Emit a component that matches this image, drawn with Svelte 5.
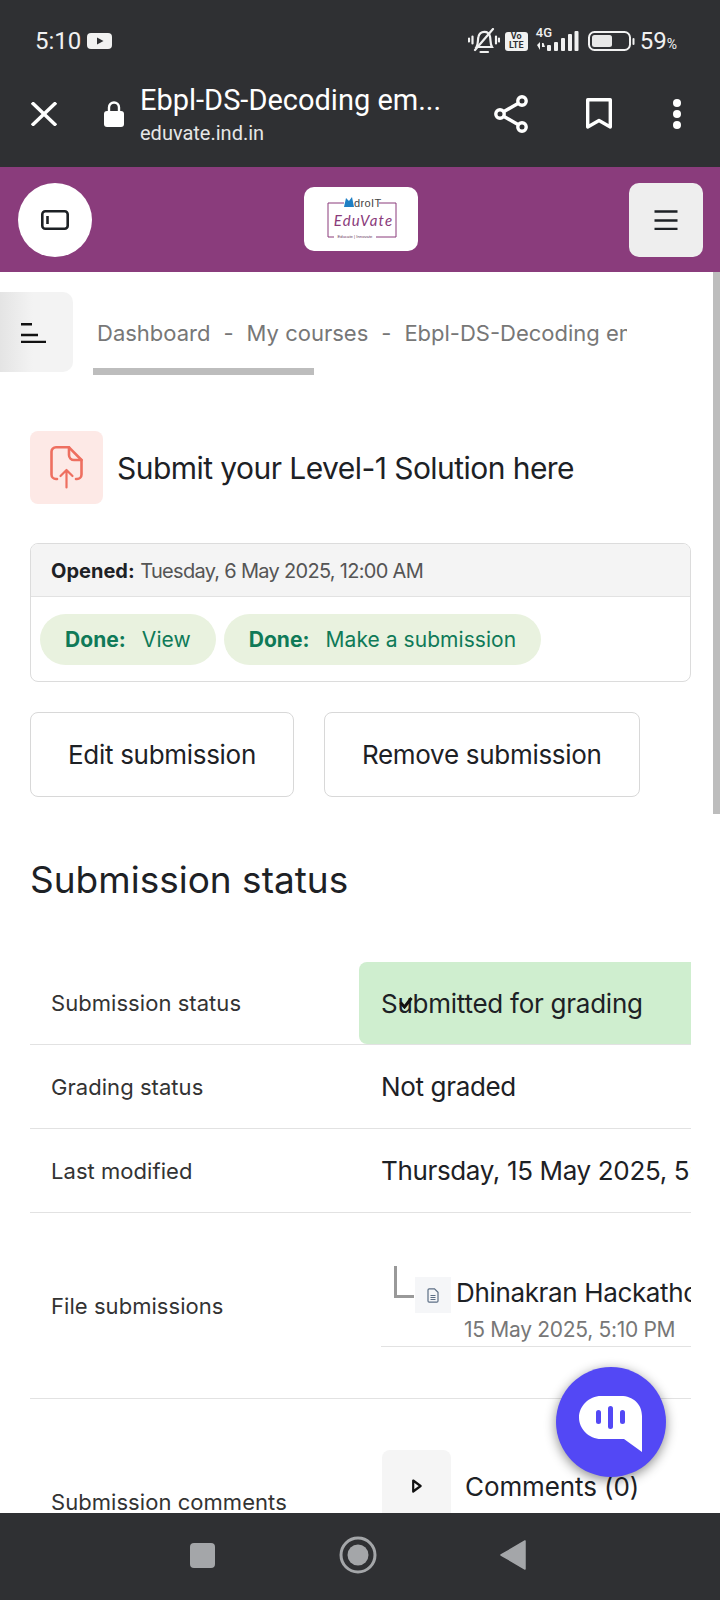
<script lang="ts">
	const rows = [
		{ label: 'Grading status', value: 'Not graded' },
		{ label: 'Last modified', value: 'Thursday, 15 May 2025, 5:10 PM' },
	];
	const crumbs = ['Dashboard', 'My courses', 'Ebpl-DS-Decoding embedded systems'];
</script>

<div class="phone">
	<!-- Android status bar -->
	<div class="status">
		<span class="clock">5:10</span>
		<svg class="yt" viewBox="0 0 25 16"><rect width="25" height="16" rx="4" fill="#f1f1f1"/><path d="M10 4.5 L16.5 8 L10 11.5Z" fill="#2f3033"/></svg>
		<span class="status-right">
			<svg class="bell" viewBox="0 0 32 26" fill="none" stroke="#f1f1f1" stroke-width="2.2" stroke-linecap="round">
				<path d="M8.5 19 C10.500 15.500 9.500 12 10.500 8.500 C12 2.500 20.500 2 22 8.500 C22.800 12 22 15.500 24 19Z"/>
				<path d="M12.500 24 H20"/>
				<path d="M7 22 L25 1"/>
				<path d="M4.500 8.500 V15.500 M1 10.500 V13.500 M28 8.500 V15.500 M31 10.500 V13.500"/>
			</svg>
			<span class="volte">Vo<br />LTE</span>
			<span class="net">
				<span class="four-g">4G</span>
				<svg viewBox="0 0 44 22" fill="#f1f1f1">
					<path d="M2 15 L5 12 V20Z M7 13 H8.5 L10 17 L7 17Z"/>
					<rect x="12" y="15" width="4" height="6" rx="1"/>
					<rect x="19" y="12" width="4" height="9" rx="1"/>
					<rect x="26" y="8" width="4" height="13" rx="1"/>
					<rect x="33" y="4" width="4" height="17" rx="1"/>
					<rect x="39.5" y="1" width="4" height="20" rx="1"/>
				</svg>
			</span>
			<svg class="battery" viewBox="0 0 47 20">
				<rect x="1" y="1" width="41" height="18" rx="5.5" fill="none" stroke="#f1f1f1" stroke-width="2"/>
				<rect x="4" y="4" width="20" height="12" rx="2.5" fill="#e8e8e8"/>
				<rect x="44.5" y="7" width="2" height="7" rx="1" fill="#f1f1f1"/>
			</svg>
			<span class="pct">59<small>%</small></span>
		</span>
	</div>

	<!-- Custom tab toolbar -->
	<div class="toolbar">
		<svg class="close" viewBox="0 0 26 24" fill="none" stroke="#fff" stroke-width="3.4"><path d="M1 0.5 L25 23.5 M25 0.5 L1 23.5"/></svg>
		<svg class="lock" viewBox="0 0 20 26"><path d="M5 11 V6.5 a5 5 0 0 1 10 0 V11" fill="none" stroke="#fff" stroke-width="2.4"/><rect y="10" width="20" height="16" rx="3" fill="#fff"/></svg>
		<div class="tab-title">
			<div class="page-name">Ebpl-DS-Decoding em...</div>
			<div class="page-url">eduvate.ind.in</div>
		</div>
		<svg class="share" viewBox="0 0 34 38" fill="none" stroke="#fff" stroke-width="3.4">
			<circle cx="28" cy="6" r="4.2"/><circle cx="6" cy="19" r="4.2"/><circle cx="28" cy="32" r="4.2"/>
			<path d="M24.4 8.2 L9.6 16.8 M9.6 21.2 L24.4 29.8"/>
		</svg>
		<svg class="mark" viewBox="0 0 26 32" fill="none" stroke="#fff" stroke-width="3.4"><path d="M1.7 1.7 H24.3 V29 L13 22.5 L1.7 29Z" stroke-linejoin="round"/></svg>
		<svg class="dots" viewBox="0 0 10 30" fill="#fff"><circle cx="5" cy="4" r="4"/><circle cx="5" cy="15" r="4"/><circle cx="5" cy="26" r="4"/></svg>
	</div>

	<!-- Site header -->
	<header class="site-head">
		<button class="round-btn" aria-label="Toggle drawer">
			<svg viewBox="0 0 28 20" fill="none" stroke="#1d2125" stroke-width="2.6"><rect x="1.3" y="1.3" width="25.4" height="17.4" rx="3"/><path d="M6.5 6 V14"/></svg>
		</button>
		<div class="logo">
			<svg viewBox="0 0 114 64">
				<path d="M40 16 H24 V50 H30 M72 50 H92 V16 H75" fill="none" stroke="#8a3b7b" stroke-width="1"/>
				<path d="M40 20 L42 11 L45 14 L48 10 L50 20Z" fill="#1f7fc4"/>
				<text x="50" y="20" class="logo-adroit">droIT</text>
				<text x="59.500" y="38.500" text-anchor="middle" class="logo-name">EduVate</text>
				<text x="51" y="51.200" text-anchor="middle" class="logo-sub">Educate | Innovate</text>
			</svg>
		</div>
		<button class="menu-btn" aria-label="Menu">
			<svg viewBox="0 0 24 20" fill="none" stroke="#1d2125" stroke-width="2.6"><path d="M0.5 1.5 H23.5 M0.5 10.5 H23.5 M0.5 19 H23.5"/></svg>
		</button>
	</header>

	<main class="content">
		<div class="page-scroll"></div>

		<div class="crumb-row">
			<button class="side-btn" aria-label="Course index">
				<svg viewBox="0 0 25 20" fill="none" stroke="#111" stroke-width="2.4"><path d="M0 1.200 H11 M0 12 H17 M0 19 H25"/></svg>
			</button>
			<div class="crumb-wrap">
				<nav class="crumbs">
					{#each crumbs as c, i}
						{#if i > 0}<span class="sep">-</span>{/if}
						<span>{c}</span>
					{/each}
				</nav>
				<div class="crumb-bar"></div>
			</div>
		</div>

		<div class="activity">
			<div class="act-icon">
				<svg viewBox="0 0 33 43" fill="none" stroke="#ee6f60" stroke-width="2.6" stroke-linecap="round" stroke-linejoin="round">
					<path d="M7 33 H6 a4.500 4.500 0 0 1 -4.500 -4.500 V6 A4.500 4.500 0 0 1 6 1.300 H19 L31.500 14 V28.500 A4.500 4.500 0 0 1 27 33 H26"/>
					<path d="M19 1.300 V9 A5 5 0 0 0 24 14 H31.500"/>
					<path d="M16.500 41.500 V24 M10.500 30 L16.500 24 L22.500 30" stroke-width="2.200"/>
				</svg>
			</div>
			<h1>Submit your Level-1 Solution here</h1>
		</div>

		<section class="dates">
			<div class="dates-head"><strong>Opened:</strong> <span>Tuesday, 6 May 2025, 12:00 AM</span></div>
			<div class="dates-body">
				<span class="pill"><b>Done:</b> View</span>
				<span class="pill"><b>Done:</b> Make a submission</span>
			</div>
		</section>

		<div class="actions">
			<button class="btn">Edit submission</button>
			<button class="btn">Remove submission</button>
		</div>

		<h2>Submission status</h2>

		<div class="table">
			<div class="row first">
				<div class="label">Submission status</div>
				<div class="value ok">
					<svg class="check" viewBox="0 0 14 12" fill="none" stroke="#111" stroke-width="3"><path d="M1.5 5.5 L5.5 10 L12.5 1"/></svg>
					Submitted for grading
				</div>
			</div>
			{#each rows as r}
				<div class="row">
					<div class="label">{r.label}</div>
					<div class="value">{r.value}</div>
				</div>
			{/each}
			<div class="row files">
				<div class="label">File submissions</div>
				<div class="value">
					<div class="file-line">
						<span class="tree"></span>
						<span class="file-icon">
							<svg viewBox="0 0 12 15" fill="none" stroke="#5d6f85" stroke-width="1.2"><path d="M1 2 A1.2 1.2 0 0 1 2.2 .8 H7.5 L11 4.3 V13 A1.2 1.2 0 0 1 9.8 14.2 H2.2 A1.2 1.2 0 0 1 1 13Z"/><path d="M3.5 7.5 H8.5 M3.5 9.5 H8.5 M3.5 11.5 H8.5" stroke-width="1"/></svg>
						</span>
						<span class="file-name">Dhinakran Hackathon Solution.pdf</span>
					</div>
					<div class="file-date">15 May 2025, 5:10 PM</div>
				</div>
			</div>
			<div class="row comments">
				<div class="label">Submission comments</div>
				<div class="value">
					<span class="cm-toggle">
						<svg viewBox="0 0 10 14" fill="none" stroke="#111" stroke-width="2.2" stroke-linejoin="round"><path d="M1.2 1.5 L8.6 7 L1.2 12.5Z"/></svg>
					</span>
					<span>Comments (0)</span>
				</div>
			</div>
		</div>

		<button class="fab" aria-label="Chat">
			<svg viewBox="0 0 63 56">
				<path d="M22 0 H42 C54 0 63 8 63 20 V56 L45 43 H22 C10 43 0 33 0 21.500 C0 10 10 0 22 0Z" fill="#fff"/>
				<rect x="17" y="14" width="5" height="14" rx="2.500" fill="#5348f5"/>
				<rect x="29" y="10" width="5" height="23" rx="2.500" fill="#5348f5"/>
				<rect x="41" y="14" width="5" height="14" rx="2.500" fill="#5348f5"/>
			</svg>
		</button>
	</main>

	<!-- Android nav bar -->
	<div class="navbar">
		<span class="nav-square"></span>
		<svg class="nav-home" viewBox="0 0 38 38"><circle cx="19" cy="19" r="17" fill="none" stroke="#a4a6a9" stroke-width="3"/><circle cx="19" cy="19" r="10.500" fill="#a4a6a9"/></svg>
		<svg class="nav-back" viewBox="0 0 26 32"><path d="M25 2 V30 L1 16Z" fill="#a4a6a9" stroke="#a4a6a9" stroke-width="1.500" stroke-linejoin="round"/></svg>
	</div>
</div>

<style>
	:global(body) {
		margin: 0;
		background: #fff;
	}

	.phone {
		width: 720px;
		height: 1600px;
		display: flex;
		flex-direction: column;
		overflow: hidden;
		font-family: Inter, "Noto Sans", sans-serif;
		color: #1d2125;
	}

	button {
		padding: 0;
		border: none;
		font: inherit;
		color: inherit;
	}

	/* ── Status bar ─────────────────────────── */
	.status {
		height: 84px;
		flex-shrink: 0;
		box-sizing: border-box;
		background: #2f3033;
		color: #f1f1f1;
		font-family: Roboto, sans-serif;
		display: flex;
		align-items: center;
		padding: 0 0 2px 35px;
	}

	.clock {
		font-size: 24px;
		width: 52px;
	}

	.yt {
		width: 25px;
		height: 16px;
	}

	.status-right {
		margin-left: auto;
		display: flex;
		align-items: center;
		margin-right: 43px;
	}

	.bell {
		width: 32px;
		height: 26px;
		margin-right: 5px;
	}

	.volte {
		width: 23px;
		height: 19px;
		border-radius: 3px;
		background: #f1f1f1;
		color: #2f3033;
		font-size: 9px;
		font-weight: 700;
		line-height: 9px;
		text-align: center;
		margin-right: 7px;
	}

	.net {
		position: relative;
		width: 44px;
		height: 22px;
		margin-right: 9px;
	}

	.net svg {
		display: block;
		width: 44px;
		height: 22px;
	}

	.four-g {
		position: absolute;
		left: 1px;
		top: -4px;
		font-size: 13px;
		font-weight: 500;
		line-height: 13px;
	}

	.battery {
		width: 47px;
		height: 20px;
		margin-right: 5px;
	}

	.pct {
		font-size: 24px;
	}

	.pct small {
		font-size: 14px;
	}

	/* ── Toolbar ────────────────────────────── */
	.toolbar {
		height: 83px;
		flex-shrink: 0;
		box-sizing: border-box;
		background: #2f3033;
		display: flex;
		align-items: center;
		padding-bottom: 23px;
		color: #fff;
		font-family: Roboto, sans-serif;
	}

	.close {
		width: 26px;
		height: 24px;
		margin-left: 31px;
	}

	.lock {
		width: 20px;
		height: 26px;
		margin-left: 47px;
	}

	.tab-title {
		margin-left: 16px;
		width: 340px;
	}

	.page-name {
		font-size: 29px;
		line-height: 36px;
	}

	.page-url {
		font-size: 20px;
		line-height: 26px;
		margin-top: 2px;
		color: #f0f0f0;
		opacity: 0.95;
	}

	.share {
		width: 34px;
		height: 38px;
		margin-left: 14px;
	}

	.mark {
		width: 26px;
		height: 32px;
		margin-left: 58px;
	}

	.dots {
		width: 10px;
		height: 30px;
		margin-left: 60px;
	}

	/* ── Site header ────────────────────────── */
	.site-head {
		height: 105px;
		flex-shrink: 0;
		background: #8a3c7c;
		display: flex;
		align-items: center;
		justify-content: space-between;
		padding: 0 17px 0 18px;
	}

	.round-btn {
		width: 74px;
		height: 74px;
		border-radius: 50%;
		background: #fff;
		display: flex;
		align-items: center;
		justify-content: center;
	}

	.round-btn svg {
		width: 28px;
		height: 20px;
	}

	.logo {
		width: 114px;
		height: 64px;
		margin-top: -2px;
		background: #fff;
		border-radius: 10px;
	}

	.logo svg {
		display: block;
		width: 114px;
		height: 64px;
	}

	.logo-adroit {
		font-family: "Liberation Sans", sans-serif;
		font-size: 11px;
		letter-spacing: 0.4px;
		fill: #444;
	}

	.logo-name {
		font-family: Lato, sans-serif;
		font-style: italic;
		font-size: 15px;
		letter-spacing: 1.2px;
		fill: #8a3b7b;
	}

	.logo-sub {
		font-family: "Liberation Sans", sans-serif;
		font-size: 4.200px;
		fill: #6b3a62;
	}

	.menu-btn {
		width: 74px;
		height: 74px;
		border-radius: 10px;
		background: #eeeeee;
		display: flex;
		align-items: center;
		justify-content: center;
	}

	.menu-btn svg {
		width: 24px;
		height: 20px;
	}

	/* ── Content ────────────────────────────── */
	.content {
		flex: 1;
		min-height: 0;
		position: relative;
		overflow: hidden;
		background: #fff;
		padding: 20px 29px 0 30px;
	}

	.page-scroll {
		position: absolute;
		right: 0;
		top: 0;
		width: 7px;
		height: 542px;
		background: #bdbdbd;
	}

	.crumb-row {
		display: flex;
		margin-left: -30px;
		height: 83px;
	}

	.side-btn {
		width: 73px;
		height: 80px;
		flex-shrink: 0;
		border-radius: 0 10px 10px 0;
		background: linear-gradient(90deg, #e4e4e4, #f3f3f3 45%);
		display: flex;
		align-items: center;
		padding-left: 21px;
		box-sizing: border-box;
	}

	.side-btn svg {
		width: 25px;
		height: 20px;
		margin-top: 2px;
	}

	.crumb-wrap {
		margin-left: 20px;
		width: 534px;
		overflow: hidden;
	}

	.crumbs {
		display: flex;
		white-space: nowrap;
		font-size: 22px;
		line-height: 30px;
		color: #777;
		padding: 26px 0 0 4px;
		gap: 13px;
	}

	.crumb-bar {
		width: 221px;
		height: 7px;
		background: #bdbdbd;
		margin-top: 20px;
	}

	.activity {
		display: flex;
		align-items: center;
		margin-top: 56px;
		gap: 14px;
	}

	.act-icon {
		width: 73px;
		height: 73px;
		border-radius: 8px;
		background: #fde9e6;
		display: flex;
		align-items: center;
		justify-content: center;
		flex-shrink: 0;
	}

	.act-icon svg {
		width: 33px;
		height: 43px;
	}

	h1 {
		margin: 0;
		font-size: 30px;
		font-weight: 400;
		line-height: 40px;
		letter-spacing: -0.55px;
	}

	.dates {
		margin-top: 39px;
		height: 139px;
		box-sizing: border-box;
		border: 1px solid #dcdcdc;
		border-radius: 8px;
		overflow: hidden;
	}

	.dates-head {
		height: 53px;
		box-sizing: border-box;
		background: #f4f4f4;
		border-bottom: 1px solid #e2e2e2;
		padding: 0 20px;
		font-size: 20px;
		line-height: 55px;
		color: #555;
	}

	.dates-head span {
		letter-spacing: -0.7px;
	}

	.dates-head strong {
		color: #1d2125;
		font-weight: 700;
	}

	.dates-body {
		display: flex;
		gap: 8px;
		padding: 17px 9px;
	}

	.pill {
		height: 51px;
		border-radius: 26px;
		background: #e9f2df;
		padding: 0 25px;
		font-size: 21px;
		line-height: 51px;
		letter-spacing: 0.05px;
		color: #0f7a58;
		white-space: nowrap;
	}

	.pill b {
		font-weight: 700;
		margin-right: 10px;
	}

	.actions {
		display: flex;
		gap: 30px;
		margin-top: 30px;
	}

	.btn {
		height: 85px;
		box-sizing: border-box;
		border: 1px solid #d8d8d8;
		border-radius: 8px;
		background: #fff;
		padding: 0 37px;
		font-size: 26px;
		letter-spacing: -0.3px;
	}

	h2 {
		margin: 61px 0 0;
		font-size: 37px;
		font-weight: 400;
		line-height: 44px;
	}

	.table {
		margin-top: 60px;
		width: 661px;
		overflow: hidden;
	}

	.row {
		display: grid;
		grid-template-columns: 329px 332px;
		height: 84px;
		box-sizing: border-box;
		border-bottom: 1px solid #e2e2e2;
		align-items: center;
	}

	.row.first {
		height: 83px;
	}

	.row.files {
		height: 186px;
	}

	.row.comments {
		height: 120px;
		border-bottom: none;
	}

	.label {
		padding-left: 21px;
		font-size: 22px;
		letter-spacing: 0.05px;
		color: #333;
	}

	.value {
		padding-left: 22px;
		font-size: 26px;
		letter-spacing: -0.35px;
		white-space: nowrap;
		overflow: hidden;
		min-width: 0;
	}

	.value.ok {
		height: 100%;
		background: #cfeecf;
		border-radius: 8px 0 0 8px;
		line-height: 84px;
		letter-spacing: -0.25px;
		position: relative;
	}

	.check {
		position: absolute;
		left: 40px;
		top: 35px;
		width: 14px;
		height: 12px;
	}

	.row.files .value {
		padding: 0;
		margin-left: 22px;
		align-self: start;
		height: 133px;
		border-bottom: 1px solid #e2e2e2;
		position: relative;
	}

	.file-line {
		display: flex;
		align-items: center;
		height: 36px;
		margin-top: 64px;
	}

	.tree {
		position: absolute;
		left: 13px;
		top: 53px;
		width: 17px;
		height: 29px;
		border-left: 3px solid #999;
		border-bottom: 3px solid #999;
	}

	.file-icon {
		width: 36px;
		height: 36px;
		margin-left: 34px;
		flex-shrink: 0;
		background: #f5f6f8;
		display: flex;
		align-items: center;
		justify-content: center;
	}

	.file-icon svg {
		width: 12px;
		height: 15px;
	}

	.file-name {
		margin: 0 0 6px 5px;
	}

	.file-date {
		font-size: 21px;
		letter-spacing: -0.3px;
		color: #777;
		margin: 4px 0 0 83px;
		line-height: 26px;
	}

	.row.comments .value {
		display: flex;
		align-items: center;
		gap: 14px;
		align-self: start;
		margin-top: 51px;
		padding-left: 23px;
		letter-spacing: -0.1px;
	}

	.cm-toggle {
		width: 69px;
		height: 72px;
		border-radius: 8px;
		background: #f5f5f5;
		display: flex;
		align-items: center;
		justify-content: center;
		flex-shrink: 0;
	}

	.cm-toggle svg {
		width: 10px;
		height: 14px;
	}

	.row.comments .label {
		align-self: start;
		margin-top: 90px;
	}

	.fab {
		position: absolute;
		left: 556px;
		top: 1095px;
		width: 110px;
		height: 110px;
		border-radius: 50%;
		background: #5348f5;
		box-shadow: 0 3px 12px rgba(0, 0, 0, 0.45);
		display: flex;
		align-items: center;
		justify-content: center;
	}

	.fab svg {
		width: 63px;
		height: 56px;
		margin: 4px 2px 0 0;
	}

	/* ── Nav bar ────────────────────────────── */
	.navbar {
		height: 87px;
		flex-shrink: 0;
		background: #2f3033;
		display: flex;
		align-items: center;
		padding-left: 190px;
		padding-bottom: 3px;
		box-sizing: border-box;
	}

	.nav-square {
		width: 25px;
		height: 25px;
		border-radius: 4px;
		background: #a4a6a9;
	}

	.nav-home {
		width: 38px;
		height: 38px;
		margin-left: 124px;
	}

	.nav-back {
		width: 26px;
		height: 32px;
		margin-left: 123px;
	}
</style>
